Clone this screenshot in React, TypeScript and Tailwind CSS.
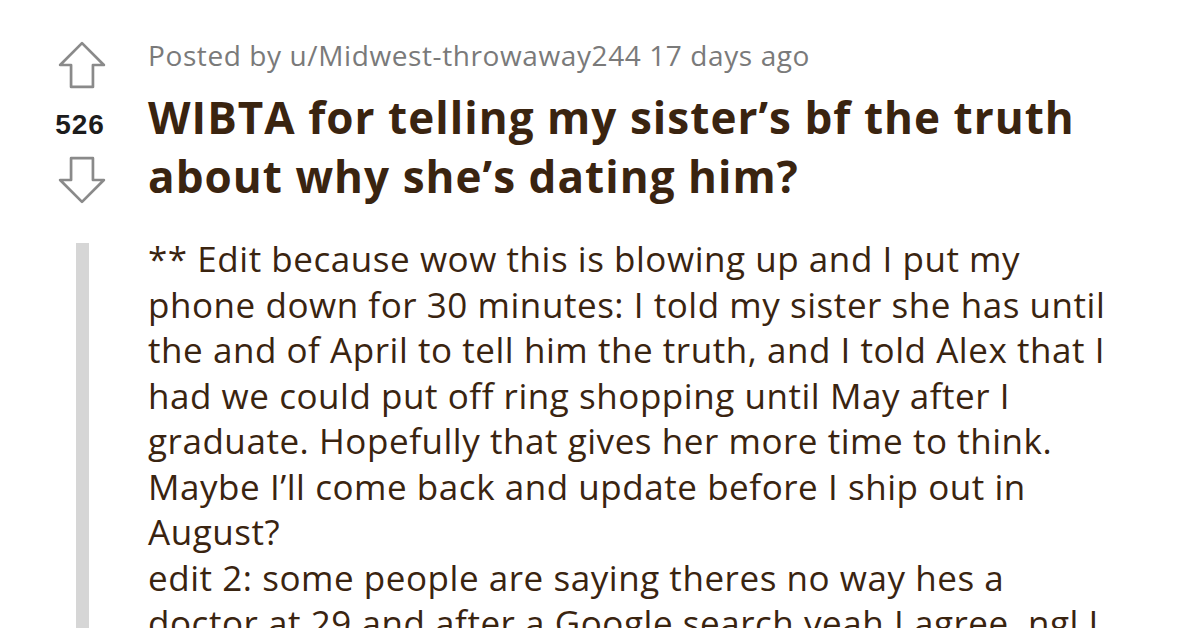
const bodyLines = [
  "** Edit because wow this is blowing up and I put my",
  "phone down for 30 minutes: I told my sister she has until",
  "the and of April to tell him the truth, and I told Alex that I",
  "had we could put off ring shopping until May after I",
  "graduate. Hopefully that gives her more time to think.",
  "Maybe I’ll come back and update before I ship out in",
  "August?",
  "edit 2: some people are saying theres no way hes a",
  "doctor at 29 and after a Google search yeah I agree, ngl I",
];

function Arrow({ down }: { down?: boolean }) {
  return (
    <svg
      viewBox="0 0 48 48"
      className={down ? "h-[50px] w-[50px] rotate-180" : "h-[50px] w-[50px]"}
      fill="none"
      stroke="#8a8a8a"
      strokeWidth="2.6"
      strokeLinejoin="round"
    >
      <path d="M24 3 L45 24 H34.5 V45 H13.5 V24 H3 Z" />
    </svg>
  );
}

export default function App() {
  return (
    <div className="h-[628px] w-[1200px] overflow-hidden bg-white font-['Open_Sans',sans-serif]">
      <div className="flex gap-[36px] pl-[52px] pt-[40px]">
        <div className="flex w-[60px] flex-col items-center">
          <Arrow />
          <div className="mt-[20px] mr-[4px] font-['Liberation_Sans',sans-serif] text-[28px] font-bold leading-[30px] tracking-[1px] text-[#1c1c1c]">
            526
          </div>
          <div className="mt-[15px]">
            <Arrow down />
          </div>
          <div className="mt-[38px] h-[400px] w-[13px] bg-[#d6d6d6]" />
        </div>
        <div className="flex flex-col">
          <div className="mt-[-2px] text-[28px] leading-[34px] tracking-[0.6px] text-[#7a7a7a]">
            Posted by u/Midwest-throwaway244 17 days ago
          </div>
          <h1 className="mt-[16px] text-[44px] font-bold leading-[59px] tracking-[1.05px] text-[#3a2410]">
            <span className="block whitespace-nowrap">WIBTA for telling my sister’s bf the truth</span>
            <span className="block whitespace-nowrap">about why she’s dating him?</span>
          </h1>
          <div className="mt-[30px] text-[35px] leading-[45.5px] tracking-[0.55px] text-[#3a2410]">
            {bodyLines.map((line) => (
              <div key={line} className="whitespace-nowrap">
                {line}
              </div>
            ))}
          </div>
        </div>
      </div>
    </div>
  );
}
